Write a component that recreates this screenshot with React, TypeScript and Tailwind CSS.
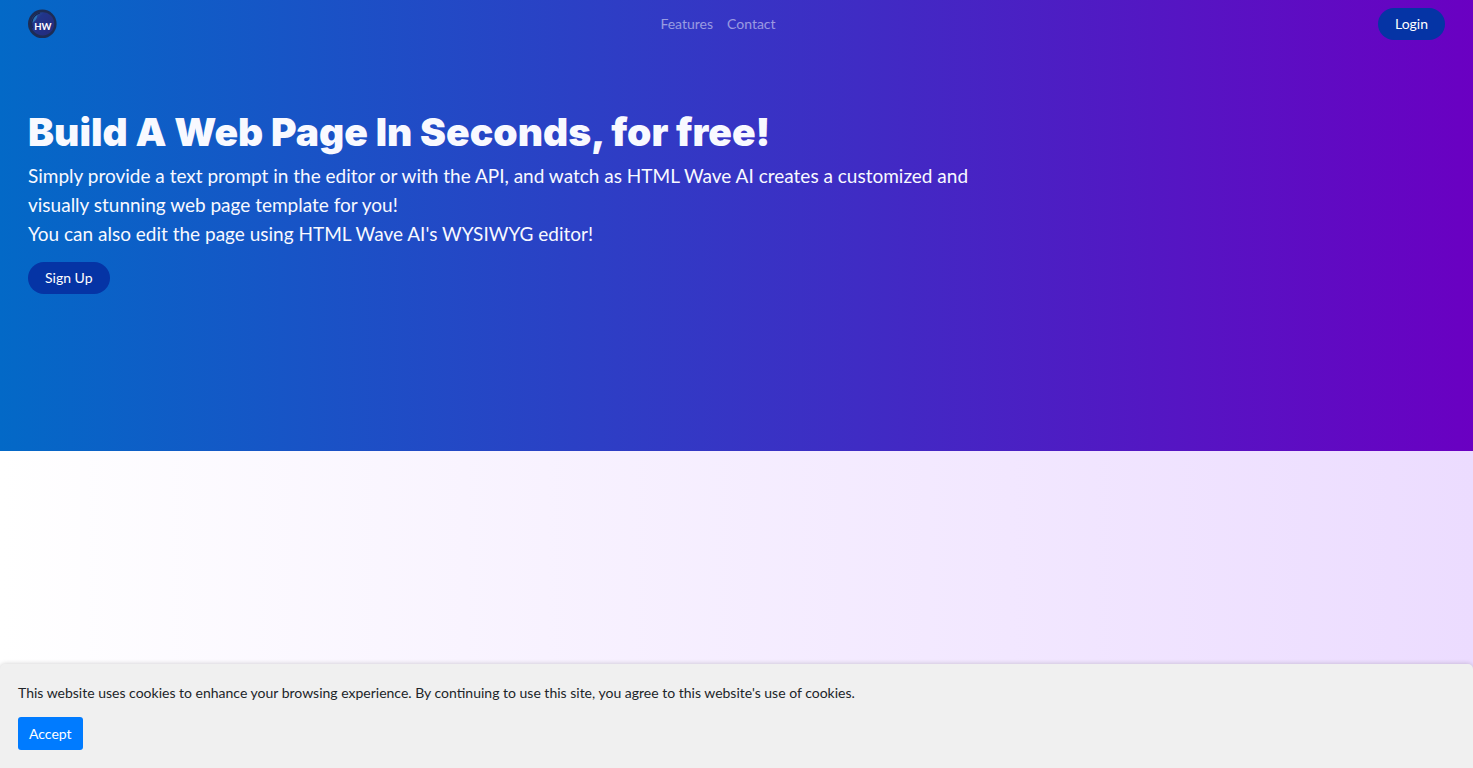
import React from "react";

function Logo() {
  return (
    <svg viewBox="0 0 30 30" className="block size-[30px]" role="img" aria-label="HTML Wave">
      <defs>
        <linearGradient id="disc" x1="0" y1="0" x2="1" y2="1">
          <stop offset="0" stopColor="#2468a8" />
          <stop offset="0.3" stopColor="#21358a" />
          <stop offset="1" stopColor="#252a7c" />
        </linearGradient>
      </defs>
      <circle cx="14.300" cy="14.800" r="14.300" fill="#1d2c54" />
      <circle cx="14.600" cy="14.800" r="11.600" fill="url(#disc)" />
      <path d="M4.500 19A11.500 11.500 0 0 1 12 4" fill="none" stroke="#16264f" strokeWidth="1.200" />
      <path d="M4.500 14C4.800 10 6.500 7.500 9.500 6C9 9 7.500 12 4.500 14Z" fill="#2b72b4" />
      <text x="14.800" y="20.800" textAnchor="middle" fill="#ffffff" fontFamily="Lato, sans-serif" fontWeight="700" fontSize="9.500">
        HW
      </text>
    </svg>
  );
}

export default function App() {
  return (
    <div className="flex min-h-screen flex-col bg-linear-to-r/srgb from-white to-[#ecdcff] font-['Lato',sans-serif] text-sm text-[#212529]">
      <div className="bg-linear-to-r/srgb from-[#0369c7] to-[#6a00c2] pb-[157px]">
        <header className="flex items-center justify-between px-7 py-2">
          <a href="#home">
            <Logo />
          </a>
          <nav className="flex gap-[14px] text-white/50">
            <a href="#features">Features</a>
            <a href="#contact">Contact</a>
          </nav>
          <button type="button" className="h-8 rounded-full bg-[#0534a5] px-[17px] text-white">
            Login
          </button>
        </header>
        <main className="px-7 pt-[63px]">
          <h1 className="font-['Inter',sans-serif] text-[39px] leading-[42px] font-black text-[#f8f9ff]">
            Build A Web Page In Seconds, for free!
          </h1>
          <p className="mt-2 max-w-[945px] text-[19px] leading-[29px] text-[#f8f9ff]">
            Simply provide a text prompt in the editor or with the API, and watch as HTML Wave AI creates a customized and
            visually stunning web page template for you!
            <br />
            You can also edit the page using HTML Wave AI's WYSIWYG editor!
          </p>
          <button type="button" className="mt-[14px] h-8 rounded-full bg-[#0534a5] px-[17px] text-white">
            Sign Up
          </button>
        </main>
      </div>
      <aside
        aria-label="Cookies"
        className="mt-auto rounded-t-[5px] bg-[#f0f0f0] px-[18px] pt-[18px] pb-[18px] shadow-[0_0_5px_rgba(0,0,0,0.2)]"
      >
        <p className="leading-[22px]">
          This website uses cookies to enhance your browsing experience. By continuing to use this site, you agree to this
          website's use of cookies.
        </p>
        <button type="button" className="mt-[13px] h-[33px] rounded-[3px] bg-[#007bff] px-[11px] text-white">
          Accept
        </button>
      </aside>
    </div>
  );
}
